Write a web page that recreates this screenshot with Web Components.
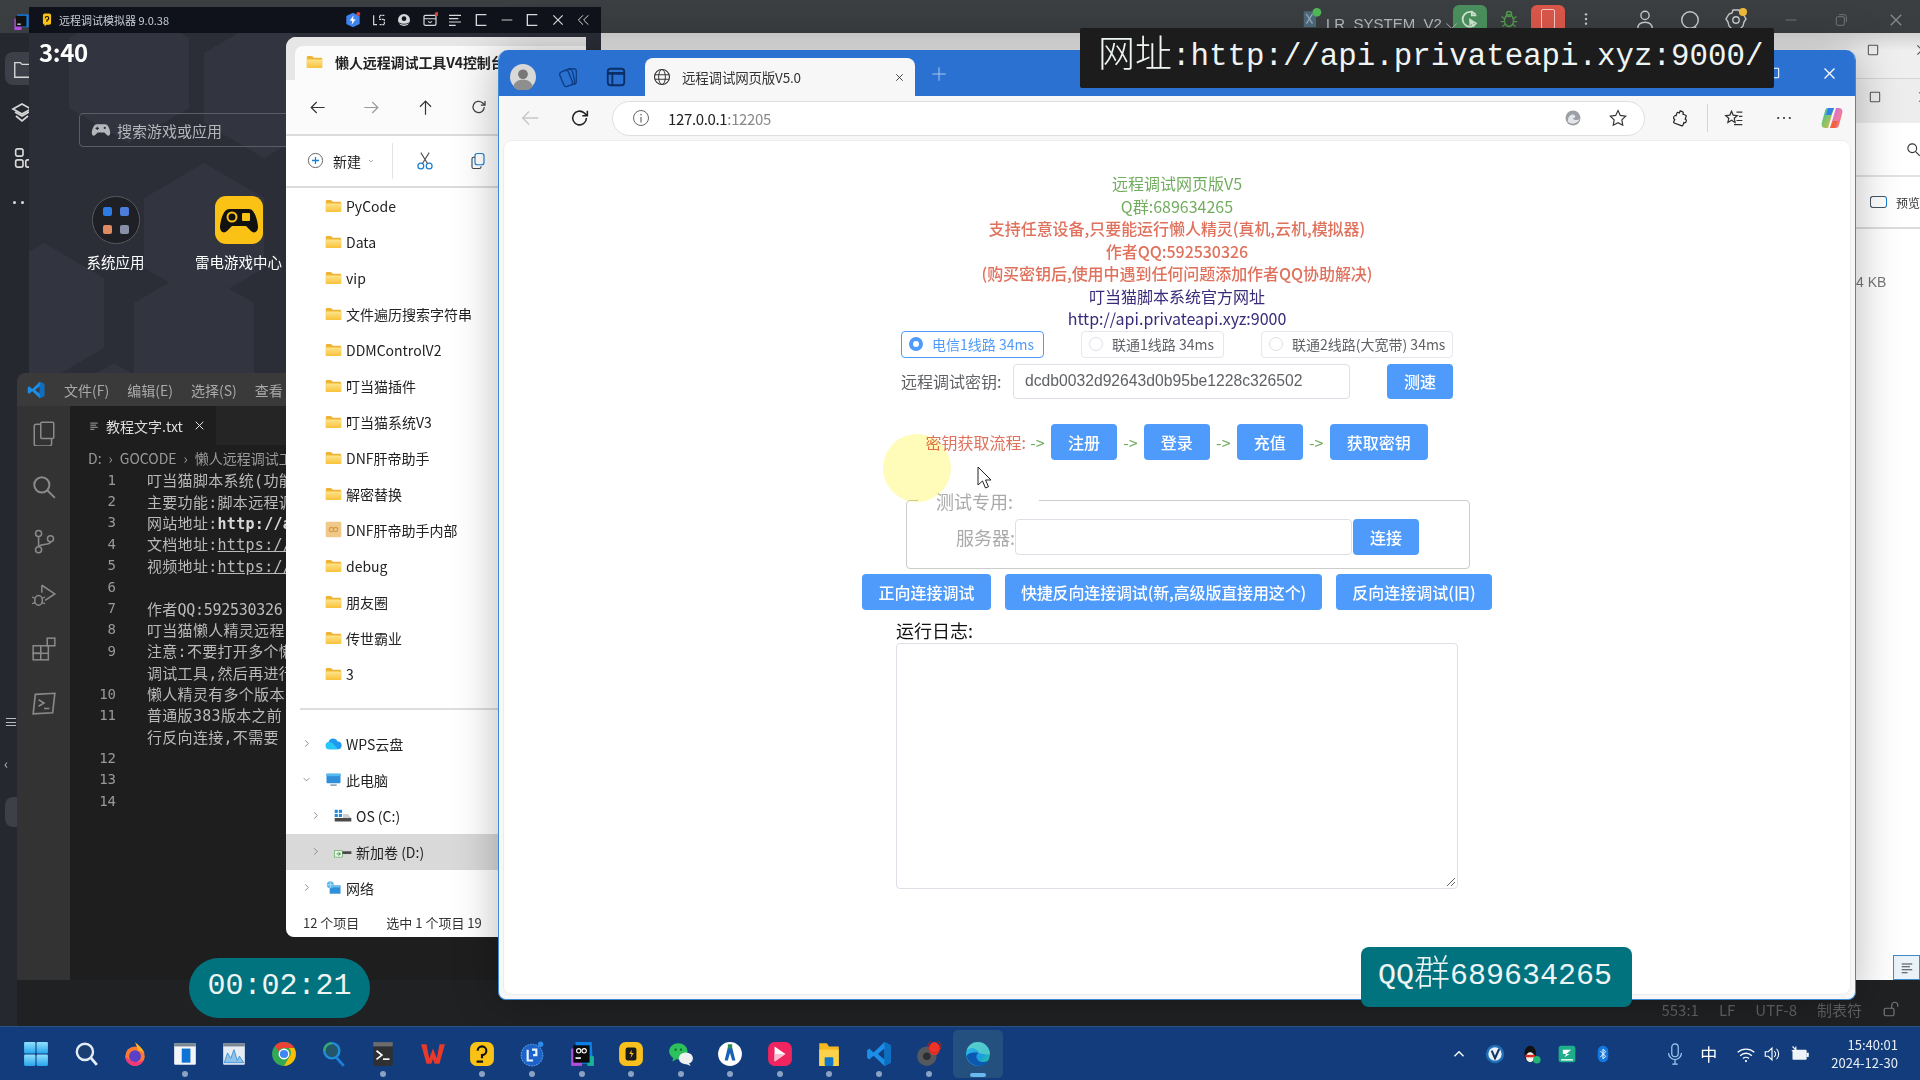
<!DOCTYPE html>
<html lang="zh"><head><meta charset="utf-8"><title>远程调试网页版V5.0</title>
<style>
html,body{margin:0;padding:0;background:#1e1e1e;overflow:hidden}
body{font-family:"Noto Sans CJK SC","Noto Sans",sans-serif}
</style></head><body>
<x-desktop>
  <x-rail></x-rail>
  <x-topbar></x-topbar>
  <x-vscode></x-vscode>
  <x-backwin></x-backwin>
  <x-emulator></x-emulator>
  <x-explorer></x-explorer>
  <x-browser>
    <x-debug-page></x-debug-page>
  </x-browser>
  <x-badge kind="black" style="left:1080px;top:28px;width:694px;height:60px"><span style="font-size:37px;font-weight:300;font-family:'Noto Sans CJK SC',sans-serif;line-height:1;position:relative;top:2px">网址</span>:http://api.privateapi.xyz:9000/</x-badge>
  <x-badge kind="pill" style="left:189px;top:958px;width:181px;height:60px">00:02:21</x-badge>
  <x-badge kind="teal" style="left:1361px;top:947px;width:271px;height:60px">QQ<span style="font-size:36px;font-weight:300;font-family:'Noto Sans CJK SC',sans-serif;line-height:1;position:relative;top:2px">群</span>689634265</x-badge>
  <x-taskbar></x-taskbar>
</x-desktop>
<script>
const F='"Noto Sans CJK SC","Noto Sans",sans-serif';
const I={
folder:['0 0 24 20','<defs><linearGradient id="g" x1="0" y1="0" x2="0" y2="1"><stop offset="0" stop-color="#ffe38a"/><stop offset="1" stop-color="#f7c23c"/></linearGradient></defs><path d="M1 3a1.5 1.5 0 0 1 1.5-1.5h6L11 4h10.5A1.5 1.5 0 0 1 23 5.500V17a1.500 1.500 0 0 1-1.500 1.500h-19A1.500 1.500 0 0 1 1 17z" fill="#eeb534"/><path d="M1 6.500h22V17a1.500 1.500 0 0 1-1.500 1.500h-19A1.500 1.500 0 0 1 1 17z" fill="url(#g)"/>'],
zipfolder:['0 0 24 24','<rect x="1" y="1" width="22" height="22" rx="2" fill="#f0c98a"/><circle cx="9" cy="12" r="3" fill="none" stroke="#d59b45" stroke-width="1.500"/><circle cx="15" cy="12" r="3" fill="none" stroke="#d59b45" stroke-width="1.500"/>'],
cloud:['0 0 24 18','<path d="M6 17a5 5 0 0 1-1-9.900A7 7 0 0 1 18 6a5.500 5.500 0 0 1 0 11z" fill="#1e9bf0"/><path d="M6 17a5 5 0 0 1 0-10c4 0 7 4 12 10z" fill="#27c8f5"/>'],
pc:['0 0 24 22','<rect x="1" y="1" width="22" height="15" rx="1" fill="#2f8fd8"/><rect x="1" y="1" width="22" height="4" fill="#55b8ee"/><rect x="7" y="18" width="10" height="2" fill="#6c8da8"/>'],
drive:['0 0 26 20','<rect x="1" y="1" width="4.500" height="4.500" fill="#1e8be0"/><rect x="7" y="1" width="4.500" height="4.500" fill="#1e8be0"/><rect x="1" y="7" width="4.500" height="4.500" fill="#1e8be0"/><rect x="7" y="7" width="4.500" height="4.500" fill="#1e8be0"/><path d="M1 13h24v5H1z" fill="#4a4a4a"/><path d="M13 7h7l5 6H13z" fill="#d0d0d0"/>'],
drive2:['0 0 28 18','<rect x="1" y="7" width="12" height="10" fill="#e9f3e4" stroke="#58a85a"/><path d="M4 12h6M7 9.500l3 2.500-3 2.500" stroke="#2e9a3f" stroke-width="1.500" fill="none"/><path d="M13 8h14v4H13z" fill="#4a4a4a"/>'],
net:['0 0 24 22','<rect x="6" y="7" width="17" height="13" fill="#2f8fd8"/><rect x="6" y="7" width="17" height="3" fill="#6ec0ee"/><circle cx="7" cy="6" r="5.500" fill="#58b7ea"/><path d="M2 6h10M7 1v10" stroke="#d8eefa" stroke-width="1"/>'],
back:['0 0 24 24','<path d="M21 12H4M11 5l-7 7 7 7" fill="none" stroke="currentColor" stroke-width="1.500"/>'],
fwd:['0 0 24 24','<path d="M3 12h17M13 5l7 7-7 7" fill="none" stroke="currentColor" stroke-width="1.500"/>'],
up:['0 0 24 24','<path d="M12 21V4M5 11l7-7 7 7" fill="none" stroke="currentColor" stroke-width="1.500"/>'],
refresh:['0 0 24 24','<path d="M19 12a7.500 7.500 0 1 1-2.500-5.600L20 9.500M20 4v5.500h-5.500" fill="none" stroke="currentColor" stroke-width="1.700"/>'],
plusc:['0 0 24 24','<circle cx="12" cy="12" r="10" fill="none" stroke="#666" stroke-width="1.400"/><path d="M12 7v10M7 12h10" stroke="#1b7fd4" stroke-width="1.800"/>'],
chevd:['0 0 24 24','<path d="M6 9l6 6 6-6" fill="none" stroke="currentColor" stroke-width="1.800"/>'],
chevr:['0 0 24 24','<path d="M9 5l7 7-7 7" fill="none" stroke="currentColor" stroke-width="1.800"/>'],
cut:['0 0 24 24','<circle cx="7" cy="18" r="3.500" fill="none" stroke="#1b7fd4" stroke-width="1.500"/><circle cx="17" cy="18" r="3.500" fill="none" stroke="#1b7fd4" stroke-width="1.500"/><path d="M9 15L17 2M15 15L7 2" stroke="#555" stroke-width="1.400"/>'],
copy:['0 0 24 24','<rect x="8" y="2" width="12" height="15" rx="3" fill="none" stroke="#1b7fd4" stroke-width="1.600"/><path d="M8 7H6a2 2 0 0 0-2 2v11a2 2 0 0 0 2 2h8a2 2 0 0 0 2-2v-1" fill="none" stroke="#444" stroke-width="1.500"/>'],
search:['0 0 24 24','<circle cx="10" cy="10" r="7" fill="none" stroke="currentColor" stroke-width="1.800"/><path d="M15 15l7 7" stroke="currentColor" stroke-width="1.800"/>'],
globe:['0 0 24 24','<circle cx="12" cy="12" r="10" fill="none" stroke="currentColor" stroke-width="1.500"/><ellipse cx="12" cy="12" rx="4.500" ry="10" fill="none" stroke="currentColor" stroke-width="1.300"/><path d="M2.500 9h19M2.500 15h19" stroke="currentColor" stroke-width="1.300"/>'],
close:['0 0 24 24','<path d="M5 5l14 14M19 5L5 19" fill="none" stroke="currentColor" stroke-width="1.800"/>'],
plus:['0 0 24 24','<path d="M12 3v18M3 12h18" stroke="currentColor" stroke-width="1.300"/>'],
avatar:['0 0 24 24','<circle cx="12" cy="12" r="12" fill="#d8d8d8"/><circle cx="12" cy="9.500" r="4.500" fill="#777"/><path d="M3 21c1-5 5-6.500 9-6.500s8 1.500 9 6.500a12 12 0 0 1-18 0z" fill="#8e8e8e"/>'],
wsp:['0 0 24 24','<rect x="10" y="3" width="10" height="17" rx="3" fill="none" stroke="#0d3f88" stroke-width="1.500"/><rect x="7" y="4" width="10" height="17" rx="3" fill="#2a71d1" stroke="#0d3f88" stroke-width="1.500" transform="rotate(-12 12 12)"/><rect x="4" y="5" width="10" height="17" rx="3" fill="#2a71d1" stroke="#0d3f88" stroke-width="1.500" transform="rotate(-22 9 14)"/>'],
vtab:['0 0 24 24','<rect x="3" y="3" width="18" height="18" rx="3" fill="none" stroke="#0b2e66" stroke-width="2"/><path d="M3 8h18" stroke="#0b2e66" stroke-width="3"/><path d="M8 8v13" stroke="#0b2e66" stroke-width="2"/>'],
info:['0 0 24 24','<circle cx="12" cy="12" r="10" fill="none" stroke="#555" stroke-width="1.200"/><path d="M12 10.500V18" stroke="#555" stroke-width="1.400"/><circle cx="12" cy="7.500" r="1" fill="#555"/>'],
star:['0 0 24 24','<path d="M12 3l2.800 5.900 6.400.9-4.600 4.500 1.100 6.400L12 17.700 6.300 20.700l1.100-6.400L2.800 9.800l6.400-.9z" fill="none" stroke="#333" stroke-width="1.400"/>'],
favs:['0 0 24 24','<path d="M9 4l2 4.500 5 .6-3.700 3.300 1 4.900L9 14.800l-4.300 2.500 1-4.900L2 9.100l5-.6z" fill="none" stroke="#333" stroke-width="1.500"/><path d="M15 5h7M18 10h4M15 15h7M12 20h10" stroke="#333" stroke-width="1.400"/>'],
ext:['0 0 24 24','<path d="M9 3h3a2 2 0 0 1 2 2v1h4a1 1 0 0 1 1 1v4h1a3 3 0 0 1 0 5h-1v4a1 1 0 0 1-1 1H7a1 1 0 0 1-1-1v-4H5a3 3 0 0 1 0-5h1V7a1 1 0 0 1 1-1h2z" fill="none" stroke="#222" stroke-width="1.600" transform="rotate(20 12 12) scale(.9) translate(1.300 1.300)"/>'],
more:['0 0 24 24','<circle cx="5" cy="12" r="1.300" fill="#333"/><circle cx="12" cy="12" r="1.300" fill="#333"/><circle cx="19" cy="12" r="1.300" fill="#333"/>'],
edgeg:['0 0 24 24','<circle cx="12" cy="12" r="10" fill="#9aa0a6"/><path d="M5 17c6 5 14 2 16-4-3 3-9 2-9-1 3 0 4-2 2-4C11 6 5 8 5 17z" fill="#e3e5e8"/>'],
copilot:['0 0 24 24','<defs><linearGradient id="c" x1="0" y1="0" x2="1" y2="1"><stop offset="0" stop-color="#27a7e0"/><stop offset=".45" stop-color="#7fc66a"/><stop offset="1" stop-color="#f7b23b"/></linearGradient><linearGradient id="d" x1="0" y1="0" x2="1" y2="1"><stop offset="0" stop-color="#b06ee0"/><stop offset=".55" stop-color="#f07ba8"/><stop offset="1" stop-color="#f46a37"/></linearGradient></defs><path d="M8 2h6l-6 20H5C2 22 1 19 2 16L5 5c.5-2 1.500-3 3-3z" fill="url(#c)"/><path d="M16 22h-6l6-20h3c3 0 4 3 3 6l-3 11c-.5 2-1.500 3-3 3z" fill="url(#d)"/><path d="M8 2h6l-3 7H6z" fill="#2f80e8"/><path d="M10 22h5l3-7h-5z" fill="#f0643c"/>'],
person:['0 0 24 24','<circle cx="12" cy="7" r="4.500" fill="none" stroke="currentColor" stroke-width="1.500"/><path d="M4 22c0-5 3.500-7.500 8-7.500s8 2.500 8 7.500" fill="none" stroke="currentColor" stroke-width="1.500"/>'],
ring:['0 0 24 24','<circle cx="12" cy="12" r="9" fill="none" stroke="currentColor" stroke-width="1.600"/><path d="M17 19l3 4" stroke="currentColor" stroke-width="1.600"/>'],
gear:['0 0 24 24','<path d="M9 2h6l1 3 3 1 3 5-2 3-1 4-4 4H9l-4-4-1-4-2-3 3-5 3-1z" fill="none" stroke="currentColor" stroke-width="1.400"/><circle cx="12" cy="12" r="3.200" fill="none" stroke="currentColor" stroke-width="1.400"/><circle cx="19" cy="4" r="4" fill="#f0b93a"/>'],
min:['0 0 24 24','<path d="M4 12h16" stroke="currentColor" stroke-width="1.400"/>'],
restore:['0 0 24 24','<rect x="5" y="7" width="12" height="13" rx="2" fill="none" stroke="currentColor" stroke-width="1.400"/><path d="M9 4h8a3 3 0 0 1 3 3v8" fill="none" stroke="currentColor" stroke-width="1.400"/>'],
square:['0 0 24 24','<rect x="4" y="4" width="16" height="16" rx="1" fill="none" stroke="currentColor" stroke-width="1.800"/>'],
sqopen:['0 0 24 24','<path d="M20 4H5v16h15" fill="none" stroke="currentColor" stroke-width="2"/>'],
boost:['0 0 24 24','<path d="M12 1l10 5v12l-10 5-10-5V6z" fill="#3f83ee"/><path d="M13 5l-6 8h4l-1 6 6-8h-4z" fill="#fff"/><circle cx="20" cy="3" r="3" fill="#d8433a"/>'],
keys:['0 0 24 24','<path d="M4 5v14h5" fill="none" stroke="currentColor" stroke-width="1.800"/><path d="M20 5h-7v6h7v8h-7" fill="none" stroke="currentColor" stroke-width="1.800" stroke-dasharray="3 1"/>'],
mouse:['0 0 24 24','<circle cx="12" cy="12" r="9" fill="currentColor"/><circle cx="12" cy="10" r="3.500" fill="#0f121b"/><path d="M4 16c4 3 12 3 16 0" fill="none" stroke="#0f121b" stroke-width="1.200"/>'],
mail:['0 0 24 24','<rect x="3" y="5" width="18" height="15" rx="2" fill="none" stroke="currentColor" stroke-width="1.800"/><path d="M3 10h18M9 14l3 2 3-2" fill="none" stroke="currentColor" stroke-width="1.600"/><circle cx="22" cy="3" r="3" fill="#d8433a"/>'],
chevl2:['0 0 24 24','<path d="M12 5l-7 7 7 7M20 5l-7 7 7 7" fill="none" stroke="currentColor" stroke-width="1.500"/>'],
dots:['0 0 24 24','<circle cx="12" cy="5" r="1.800" fill="currentColor"/><circle cx="12" cy="12" r="1.800" fill="currentColor"/><circle cx="12" cy="19" r="1.800" fill="currentColor"/>'],
bug:['0 0 24 24','<ellipse cx="12" cy="14" rx="5.500" ry="7" fill="none" stroke="#4f9a4a" stroke-width="1.800"/><circle cx="12" cy="6" r="3" fill="none" stroke="#4f9a4a" stroke-width="1.800"/><path d="M3 9l4 3M21 9l-4 3M2 15h4M22 15h-4M4 21l4-3M20 21l-4-3" stroke="#4f9a4a" stroke-width="1.500"/>'],
rerun:['0 0 24 24','<path d="M18 7a8 8 0 1 0 1 9" fill="none" stroke="#cfe3cf" stroke-width="2"/><path d="M14 3v5h5" fill="none" stroke="#cfe3cf" stroke-width="2"/><path d="M11 11l8 5-3.500 1 1.500 3-1.500.7-1.500-3-2.500 2z" fill="#cfe3cf"/>'],
lrsys:['0 0 24 24','<rect x="2" y="5" width="14" height="18" fill="#4d6a7a"/><path d="M5 8l7 11M12 8l-7 11" stroke="#9ab" stroke-width="1.500"/><circle cx="17" cy="6" r="5" fill="#4fb857"/>'],
lock:['0 0 24 24','<rect x="3" y="11" width="13" height="10" rx="2" fill="none" stroke="currentColor" stroke-width="1.600"/><path d="M13 11V7a4 4 0 0 1 8 0v2" fill="none" stroke="currentColor" stroke-width="1.600"/>'],
gamepad:['0 0 24 24','<path d="M7 5h10c3 0 5 4 6 9 .5 4-2 6-4 4l-3-3H8l-3 3c-2 2-4.500 0-4-4C2 9 4 5 7 5z" fill="currentColor"/><circle cx="16.500" cy="9.500" r="1.300" fill="#2b2e37"/><path d="M7.500 8v4M5.500 10h4" stroke="#2b2e37" stroke-width="1.400"/>'],
files:['0 0 24 24','<path d="M3 5h6l2 2h10v14H3z" fill="none" stroke="currentColor" stroke-width="1.500"/>'],
hat:['0 0 24 24','<path d="M12 3l9 5-9 5-9-5z" fill="none" stroke="currentColor" stroke-width="1.700"/><path d="M5 11l7 4 7-4M6 15l6 5 6-5" fill="none" stroke="currentColor" stroke-width="1.700"/>'],
apps:['0 0 24 24','<rect x="4" y="2" width="8" height="8" rx="2" fill="none" stroke="currentColor" stroke-width="1.800"/><rect x="4" y="14" width="8" height="8" rx="2" fill="none" stroke="currentColor" stroke-width="1.800"/><rect x="15" y="14" width="8" height="8" rx="2" fill="none" stroke="currentColor" stroke-width="1.800"/>'],
sysapp:['0 0 48 48','<rect x="0.500" y="0.500" width="47" height="47" rx="23" fill="#1e2026" stroke="#585a60"/><rect x="11" y="11" width="9" height="9" rx="2" fill="#2c7be5"/><rect x="28" y="11" width="9" height="9" rx="2" fill="#4c7dd8"/><rect x="11" y="29" width="9" height="9" rx="2" fill="#e08a62"/><rect x="28" y="29" width="9" height="9" rx="2" fill="#8a8fa8"/>'],
ldgame:['0 0 48 48','<rect width="48" height="48" rx="11" fill="#f9c215"/><path d="M14 13h20c5 0 8 9 9 17 .5 6-4 8-7 5l-5-5H17l-5 5c-3 3-7.500 1-7-5 1-8 4-17 9-17z" fill="#111"/><circle cx="17" cy="21" r="4.500" fill="none" stroke="#f9c215" stroke-width="2"/><rect x="27" y="17" width="8" height="8" rx="1" fill="#f9c215"/>'],
ldlogo:['0 0 24 24','<path d="M5 4a3 3 0 0 1 3-3h8a3 3 0 0 1 3 3v13a3 3 0 0 1-3 3h-5l-3 3v-3a3 3 0 0 1-3-3z" fill="#f9c215"/><path d="M9 9a3 3 0 1 1 3 3v3" fill="none" stroke="#111" stroke-width="2"/>'],
golandtop:['0 0 24 24','<path d="M6 2h16v18H6z" fill="#0d7ef0"/><path d="M2 8h10v16H2z" fill="#b24ddc"/><rect x="4" y="4" width="15" height="15" fill="#111"/><rect x="6" y="15" width="5" height="1.500" fill="#fff"/>'],
vsc:['0 0 24 24','<path d="M17 1l6 3v16l-6 3L7 13.500l-4 3.500-2-1.500v-7L3 7l4 3.500zM17 7l-6 5 6 5z" fill="#1b8ee8"/><path d="M17 1l6 3v16l-6 3z" fill="#0e6fc0"/>'],
doc:['0 0 24 24','<rect x="4" y="2" width="16" height="20" rx="2" fill="none" stroke="currentColor" stroke-width="1.400" transform="translate(-1 2)"/><rect x="9" y="2" width="12" height="15" rx="1" fill="#333" stroke="currentColor" stroke-width="1.400"/>'],
sc:['0 0 24 24','<circle cx="7" cy="5" r="2.800" fill="none" stroke="currentColor" stroke-width="1.400"/><circle cx="7" cy="20" r="2.800" fill="none" stroke="currentColor" stroke-width="1.400"/><circle cx="18" cy="10" r="2.800" fill="none" stroke="currentColor" stroke-width="1.400"/><path d="M7 8v9M18 13c0 3-7 1-11 4" fill="none" stroke="currentColor" stroke-width="1.400"/>'],
debug:['0 0 24 24','<path d="M10 3l12 8-9 6M10 3v7" fill="none" stroke="currentColor" stroke-width="1.400"/><ellipse cx="7" cy="17" rx="3.500" ry="4.500" fill="none" stroke="currentColor" stroke-width="1.400"/><path d="M1 14l3 1M1 20l3-1M13 14l-3 1M13 20l-3-1" stroke="currentColor" stroke-width="1.200"/>'],
extv:['0 0 24 24','<rect x="2" y="9" width="7" height="7" fill="none" stroke="currentColor" stroke-width="1.400"/><rect x="2" y="16" width="14" height="6" fill="none" stroke="currentColor" stroke-width="1.400"/><path d="M9 16v6" stroke="currentColor" stroke-width="1.400"/><path d="M9 9h7v7" fill="none" stroke="currentColor" stroke-width="1.400"/><rect x="15" y="2" width="7" height="7" fill="none" stroke="currentColor" stroke-width="1.400"/>'],
term:['0 0 24 24','<path d="M4 4l18-1-2 18-18 1z" fill="none" stroke="currentColor" stroke-width="1.500"/><path d="M7 9l5 3-5 3M12 17h5" fill="none" stroke="currentColor" stroke-width="1.400"/>'],
lines:['0 0 24 24','<path d="M3 5h18M3 10h14M3 15h18M3 20h10" stroke="currentColor" stroke-width="1.800"/>'],
win:['0 0 24 24','<defs><linearGradient id="w" x1="0" y1="0" x2="0" y2="1"><stop offset="0" stop-color="#8fe0fb"/><stop offset="1" stop-color="#26a5ee"/></linearGradient></defs><rect x="1" y="1" width="10.500" height="10.500" rx="1" fill="url(#w)"/><rect x="12.500" y="1" width="10.500" height="10.500" rx="1" fill="url(#w)"/><rect x="1" y="12.500" width="10.500" height="10.500" rx="1" fill="url(#w)"/><rect x="12.500" y="12.500" width="10.500" height="10.500" rx="1" fill="url(#w)"/>'],
tsearch:['0 0 24 24','<circle cx="11" cy="10" r="7.500" fill="#1a3d72" stroke="#e4ecf6" stroke-width="2.200"/><path d="M16.500 15.500L22 22" stroke="#e4ecf6" stroke-width="2.600"/>'],
firefox:['0 0 24 24','<circle cx="12" cy="14" r="9" fill="#ff7a2f"/><path d="M12 1c3 3 7 5 9 11-2-3-5-3-6-3z" fill="#ffb02e"/><circle cx="12" cy="14" r="5.500" fill="#5a3fc9"/><path d="M3 14c0 6 6 9 9 9s7-2 8-6c-3 3-10 4-17-3z" fill="#f0387a"/>'],
fileapp:['0 0 24 24','<rect x="2" y="2" width="20" height="20" rx="1" fill="#f3f5f8"/><rect x="2" y="2" width="20" height="3" fill="#7c8794"/><rect x="9" y="7" width="8" height="13" fill="#0f72d6"/>'],
perf:['0 0 24 24','<rect x="2" y="2" width="20" height="20" rx="1" fill="#e6ecf3"/><rect x="2" y="2" width="20" height="3" fill="#7c8794"/><path d="M3 20l3-9 3 5 3-8 3 10 2-4 4 6z" fill="#8fc3ea" stroke="#3a8ed4" stroke-width=".8"/>'],
chrome:['0 0 24 24','<circle cx="12" cy="12" r="11" fill="#34a853"/><path d="M12 1a11 11 0 0 1 9.500 5.500H12a5.500 5.500 0 0 0-5 3L3.500 4.500A11 11 0 0 1 12 1z" fill="#ea4335"/><path d="M21.500 6.500A11 11 0 0 1 12 23l5-8.500a5.500 5.500 0 0 0-.5-8z" fill="#fbbc05"/><circle cx="12" cy="12" r="5" fill="#fff"/><circle cx="12" cy="12" r="3.800" fill="#4285f4"/>'],
bsearch:['0 0 24 24','<circle cx="10" cy="9" r="7" fill="#24566a" stroke="#1e8fd8" stroke-width="2.200"/><path d="M10 2a7 7 0 0 0-7 7" stroke="#3aa86a" stroke-width="2.200" fill="none"/><path d="M14 15l7 8" stroke="#1e7fd8" stroke-width="2.600"/>'],
termapp:['0 0 24 24','<rect x="3" y="1" width="18" height="22" rx="1" fill="#2f3033"/><rect x="3" y="1" width="18" height="4" fill="#6a6c70"/><path d="M6 9l5 4-5 4" fill="none" stroke="#fff" stroke-width="1.500"/><rect x="12" y="16" width="6" height="1.500" fill="#fff"/>'],
wps:['0 0 24 24','<path d="M1 3h5l2.500 13L12 7l3.500 9L18 3h5l-5 18h-4.500L12 16.500 10.500 21H6z" fill="#e8392b"/>'],
ldapp:['0 0 24 24','<rect x="1" y="1" width="22" height="22" rx="6" fill="#f9c215"/><path d="M8 9a4 4 0 1 1 4 4v3M7 19h6" fill="none" stroke="#111" stroke-width="2"/>'],
lr:['0 0 24 24','<circle cx="12" cy="13" r="10" fill="#1c62c8" stroke="#5aa0e8" stroke-width="1" stroke-dasharray="1.500 1"/><path d="M8 8v10h5M12 8h4v5h-3" fill="none" stroke="#e8f3ff" stroke-width="2"/><circle cx="20" cy="3" r="2.500" fill="#2d8bea"/>'],
goland:['0 0 24 24','<path d="M6 1h15l1 20H8z" fill="#0e7fe8"/><path d="M2 7h10v16H2z" fill="#b24ddc"/><path d="M17 14h6v9h-6z" fill="#19b39a"/><rect x="4" y="4" width="15" height="16" fill="#0a0a0a"/><circle cx="9" cy="9" r="2" fill="none" stroke="#fff"/><circle cx="14" cy="9" r="2" fill="none" stroke="#fff"/><rect x="6" y="15" width="5" height="1.500" fill="#fff"/>'],
yellow:['0 0 24 24','<rect x="1" y="1" width="22" height="22" rx="6" fill="#f9bf1c"/><rect x="7" y="6" width="10" height="12" rx="2" fill="#1a1a1a"/><path d="M12.500 8l-2 4h2l-1 4 3-5h-2z" fill="#f9bf1c"/>'],
wechat:['0 0 24 24','<ellipse cx="9.500" cy="9.500" rx="8.500" ry="7.500" fill="#2dc15c"/><path d="M5 15l-1 4 4-2.500z" fill="#2dc15c"/><circle cx="7" cy="8" r="1" fill="#0d5a2a"/><circle cx="12" cy="8" r="1" fill="#0d5a2a"/><ellipse cx="16.500" cy="16" rx="6.500" ry="5.500" fill="#eef0f2"/><path d="M19 20l2 3-5-2z" fill="#eef0f2"/>'],
hm:['0 0 24 24','<circle cx="12" cy="12" r="11" fill="#fff"/><path d="M7 18l3-12h4l3 12h-3l-2-7-2 7z" fill="#1a5fb8"/><rect x="10" y="3" width="4" height="4" fill="#2a8a5a"/>'],
redapp:['0 0 24 24','<rect x="1" y="1" width="22" height="22" rx="6" fill="#f0245f"/><path d="M7 5l10 7-10 7z" fill="#fff"/><path d="M7 12l10 0-10 7z" fill="#f9bdd0"/>'],
folderapp:['0 0 24 24','<path d="M3 2h7l2 3h9v18H3z" fill="#f6b91f"/><path d="M3 8h18v15H3z" fill="#fbd24a"/><rect x="8" y="15" width="8" height="8" rx="1" fill="#1276c8"/>'],
obs:['0 0 24 24','<circle cx="10" cy="14" r="9" fill="#55585c"/><circle cx="10" cy="14" r="3.500" fill="#2c2e31"/><ellipse cx="17" cy="7" rx="5" ry="6" fill="#ef3326"/><circle cx="17" cy="5" r="6" fill="none" stroke="#bb2a22" stroke-width=".8"/>'],
edge:['0 0 24 24','<defs><linearGradient id="e" x1="0" y1="0" x2="1" y2="1"><stop offset="0" stop-color="#35c1e6"/><stop offset=".6" stop-color="#1a9ce0"/><stop offset="1" stop-color="#2bd08a"/></linearGradient></defs><circle cx="12" cy="12" r="11" fill="url(#e)"/><path d="M1.500 14c1 5 6 9 12 9 4 0 7-2 8-5-3 2-8 2-10-1-1.500-2-1-5 1-6-5-1-10 0-11 3z" fill="#0c58b0"/><path d="M13 11c3 1 9 2 10 1-.5-6-5-11-11-11-5 0-9 3-10.500 8 3-4 9-3 11.500 2z" fill="#6fe0c0" opacity=".6"/>'],
tick:['0 0 24 24','<circle cx="12" cy="12" r="11" fill="#1f6fb8"/><circle cx="12" cy="12" r="8" fill="#e9f2fb"/><path d="M8 8l4 9 5-11" fill="none" stroke="#14365e" stroke-width="2.500"/>'],
qq:['0 0 24 24','<ellipse cx="11" cy="12" rx="7" ry="10" fill="#111"/><ellipse cx="11" cy="16" rx="5" ry="6" fill="#f3f3f3"/><path d="M5 13h12v3H5z" fill="#d82a20"/><circle cx="19" cy="19" r="4.500" fill="#22b573"/>'],
greenbox:['0 0 24 24','<rect x="2" y="2" width="20" height="20" rx="3" fill="#1fae8a"/><path d="M7 7h10l-6 5h4l-6 4 2-4H7z" fill="#fff"/><rect x="5" y="18" width="14" height="2" fill="#d8f3ea"/>'],
bt:['0 0 24 24','<rect x="5" y="1" width="14" height="22" rx="7" fill="#1577e0"/><path d="M8.500 8l7 7-3.500 3.500v-13L15.500 9l-7 7" fill="none" stroke="#fff" stroke-width="1.300"/>'],
mic:['0 0 24 24','<rect x="8.500" y="1" width="7" height="14" rx="3.500" fill="none" stroke="#9fd0f5" stroke-width="1.300"/><path d="M5 11a7 7 0 0 0 14 0M12 18v5M9 23h6" fill="none" stroke="#9fd0f5" stroke-width="1.300"/>'],
wifi:['0 0 24 24','<path d="M2 10a15 15 0 0 1 20 0M5 14a10 10 0 0 1 14 0M8.500 17.500a5 5 0 0 1 7 0" fill="none" stroke="#fff" stroke-width="1.600"/><circle cx="12" cy="20.500" r="1.300" fill="#fff"/>'],
vol:['0 0 24 24','<path d="M3 9h4l5-5v16l-5-5H3z" fill="none" stroke="#fff" stroke-width="1.500"/><path d="M15 8a6 6 0 0 1 0 8M18 5a10 10 0 0 1 0 14" fill="none" stroke="#fff" stroke-width="1.400"/>'],
batt:['0 0 24 24','<rect x="3" y="7" width="17" height="12" rx="1" fill="#eef3f8"/><rect x="20" y="10.500" width="2.500" height="5" fill="#fff"/><path d="M3 3l4 4M7 3v5H2" stroke="#fff" stroke-width="1.300" fill="none"/>'],
};
function def(n,f){customElements.define(n,f)}
function shadow(el,html){const s=el.shadowRoot||el.attachShadow({mode:'open'});s.innerHTML=html;return s}
const ic=(n,s,st='')=>`<x-icon name="${n}" size="${s}" style="${st}"></x-icon>`;

def('x-icon',class extends HTMLElement{connectedCallback(){
  const n=this.getAttribute('name'),[w,h]=(this.getAttribute('size')||'24').split(',');const d=I[n];
  shadow(this,`<style>:host{display:inline-flex;flex:none;line-height:0}svg{display:block}</style><svg xmlns="http://www.w3.org/2000/svg" viewBox="${d[0]}" width="${w}" height="${h||w}">${d[1]}</svg>`);
}});

def('x-desktop',class extends HTMLElement{connectedCallback(){
  shadow(this,`<style>:host{display:block;position:relative;width:1920px;height:1080px;overflow:hidden;background:#1e1e1e}</style><slot></slot>`);
}});

def('x-rail',class extends HTMLElement{connectedCallback(){
  shadow(this,`<style>:host{position:absolute;left:0;top:33px;width:29px;height:993px;background:#262830;color:#d8d8d8;display:flex;flex-direction:column;align-items:flex-start}
  .sel{margin:19px 0 0 5px;width:24px;height:33px;background:#3d4048;border-radius:8px 0 0 8px;display:flex;align-items:center;padding-left:7px;box-sizing:border-box}
  .i{margin:16px 0 0 10px}.i2{margin:17px 0 0 12px}.dots{margin:27px 0 0 13px;display:flex;gap:5px}.dots b{width:3px;height:3px;border-radius:50%;background:#ddd}
  .low{margin:0 0 0 4px;width:13px;font:14px ${F};color:#bbb}.sel2{margin:24px 0 0 5px;width:12px;height:30px;background:#3d4048;border-radius:8px 0 0 8px}</style>
  <div class="sel">${ic('files',22)}</div><div class="i">${ic('hat',24)}</div><div class="i2">${ic('apps',22)}</div><div class="dots"><b></b><b></b><b></b></div>
  <div class="low" style="margin-top:507px">≡</div><div class="low" style="margin-top:22px">‹</div><div class="sel2"></div>`);
}});

def('x-topbar',class extends HTMLElement{connectedCallback(){
  shadow(this,`<style>:host{position:absolute;left:0;top:0;width:1920px;height:33px;background:linear-gradient(#3c3f42,#3a3d3f);display:flex;align-items:flex-start;color:#c9c9c9;font:15px ${F}}
  .r{margin-left:1302px;display:flex;align-items:center;height:33px;flex:1}
  .btn{width:34px;height:28px;border-radius:6px;display:flex;align-items:center;justify-content:center;margin-top:5px}
  .txt{margin-left:3px;font:15px "Liberation Sans",sans-serif;width:112px;white-space:nowrap;position:relative;top:7px;color:#b5b8ba}
  .r>x-icon{position:relative}</style>
  ${ic('golandtop',17,'position:absolute;left:13px;top:13px')}
  <div class="r">${ic('lrsys',21,'top:1px')}<span class="txt">LR_SYSTEM_V2 ⌵</span>
  <div class="btn" style="margin-left:15px;background:#4b8f5e">${ic('rerun',22)}</div>${ic('bug',20,'margin-left:12px;top:2px')}
  <div class="btn" style="margin-left:12px;background:#d9574a"><div style="width:12px;height:18px;border:1.500px solid #f4c7c2;border-radius:2px"></div></div>
  ${ic('dots',16,'margin-left:13px;top:2px')}${ic('person',22,'margin-left:40px;top:3px')}${ic('ring',22,'margin-left:23px;top:3px')}${ic('gear',24,'margin-left:23px;top:3px')}
  ${ic('min',16,'margin-left:35px;color:#777;top:3px')}${ic('restore',16,'margin-left:34px;color:#777;top:3px')}${ic('close',18,'margin-left:38px;color:#888;top:3px')}</div>`);
}});

def('x-emulator',class extends HTMLElement{connectedCallback(){
  const hex=[[40,-30],[175,-15],[115,130],[-45,210],[105,235],[25,330],[-45,330]];
  shadow(this,`<style>:host{position:absolute;left:29px;top:7px;width:572px;height:366px;background:#2b2e37;color:#fff;overflow:hidden;display:flex;flex-direction:column;font-family:${F}}
  .title{height:26px;background:#0f121b;display:flex;align-items:center;padding-left:11px;flex:none;z-index:1}
  .title span{margin:0 0 0 5px;font-size:11px;color:#c8ccd4;white-space:nowrap;width:286px;flex:none}
  .tools{display:flex;gap:9.600px;color:#d6d8dc}
  .bg{position:absolute;left:0;top:26px}
  .body{position:relative;display:flex;flex-direction:column;padding-left:10px}
  .time{font-size:24px;font-weight:700;line-height:28px;margin-top:5px;letter-spacing:-.4px}
  .search{margin:47px 0 0 40px;height:34px;width:260px;border:1px solid #5a5d66;border-radius:4px;box-sizing:border-box;display:flex;align-items:center;padding-left:11px;color:#b4b6bb;font-size:15px;gap:6px}
  .apps{display:flex;margin:49px 0 0 15px}
  .app{width:123px;display:flex;flex-direction:column;align-items:center;font-size:14.500px;gap:7px;white-space:nowrap}
  </style>
  <svg class="bg" width="572" height="340">${hex.map(([x,y])=>`<polygon transform="translate(${x},${y})" points="60,0 120,35 120,105 60,140 0,105 0,35" fill="#32353f"/>`).join('')}</svg>
  <div class="title">${ic('ldlogo',14)}<span>远程调试模拟器 9.0.38</span>
   <div class="tools">${ic('boost',16)}${ic('keys',16)}${ic('mouse',16)}${ic('mail',16)}${ic('lines',16)}${ic('sqopen',16)}${ic('min',16)}${ic('sqopen',16)}${ic('close',16)}${ic('chevl2',16)}</div></div>
  <div class="body"><div class="time">3:40</div>
  <div class="search">${ic('gamepad',20)}<span>搜索游戏或应用</span></div>
  <div class="apps"><div class="app">${ic('sysapp',48)}<span>系统应用</span></div><div class="app">${ic('ldgame',48)}<span>雷电游戏中心</span></div></div></div>`);
}});

def('x-vscode',class extends HTMLElement{connectedCallback(){
  const L=[['1','叮当猫脚本系统(功能'],['2','主要功能:脚本远程调'],['3','网站地址:<b>http://a</b>'],['4','文档地址:<u>https://</u>'],['5','视频地址:<u>https://</u>'],['6',''],['7','作者<u class="n0">QQ:592530326</u>'],['8','叮当猫懒人精灵远程'],['9','注意:不要打开多个懒'],['','调试工具,然后再进行'],['10','懒人精灵有多个版本'],['11','普通版383版本之前'],['','行反向连接,不需要'],['12',''],['13',''],['14','']];
  shadow(this,`<style>:host{position:absolute;left:17px;top:373px;width:1903px;height:653px;background:#1e1e1e;color:#ccc;display:flex;flex-direction:column;font-family:${F};border-radius:8px 0 0 0;overflow:hidden}
  .title{height:33px;background:#3a3a3a;display:flex;align-items:center;font-size:14px;color:#a9a9a9;flex:none;padding-left:10px}
  .title span{margin-right:18px;white-space:nowrap}
  .main{flex:1;display:flex;min-height:0}
  .act{width:53px;background:#333;display:flex;flex-direction:column;align-items:center;color:#8a8a8a;gap:28px;padding-top:14px;flex:none;box-sizing:border-box}
  .ed{flex:1;display:flex;flex-direction:column;min-width:0}
  .tabs{height:39px;background:#252526;display:flex;flex:none}
  .tab{width:146px;background:#1e1e1e;display:flex;align-items:center;padding-left:19px;box-sizing:border-box;color:#ddd;font-size:14px;gap:7px}
  .crumb{height:26px;font-size:14px;color:#9a9a9a;display:flex;align-items:center;padding-left:18px;gap:7px;white-space:nowrap;flex:none}
  .code{font:15px "DejaVu Sans Mono","Noto Sans CJK SC",monospace;margin-top:-2px}
  .ln{height:21.400px;display:flex;align-items:center;white-space:nowrap}
  .n{width:46px;text-align:right;color:#9a9a9a;font-size:14px;flex:none;margin-right:31px}
  .c{color:#b9b9b9;letter-spacing:.3px}.c b{color:#d8d8d8}.c u{color:#bbb}
  .c u.n0{text-decoration:none;letter-spacing:-.3px}
  .status{height:46px;flex:none;background:#1f2123;display:flex;align-items:center;justify-content:flex-end;padding:12px 20px 0 0;box-sizing:border-box;font-size:15px;color:#5f6163;gap:20px;margin-left:-53px;position:relative}
  </style>
  <div class="title">${ic('vsc',18)}<span style="margin-left:19px">文件(F)</span><span>编辑(E)</span><span>选择(S)</span><span>查看</span></div>
  <div class="main"><div class="act">${ic('doc',26)}${ic('search',26)}${ic('sc',26)}${ic('debug',26)}${ic('extv',26)}${ic('term',26)}</div>
  <div class="ed"><div class="tabs"><div class="tab">${ic('lines',10,'color:#ccc')}<span>教程文字.txt</span>${ic('close',13,'margin-left:3px;color:#eee')}</div></div>
  <div class="crumb"><span>D:</span>›<span>GOCODE</span>›<span>懒人远程调试工具</span></div>
  <div class="code">${L.map(([n,c])=>`<div class="ln"><span class="n">${n}</span><span class="c">${c}</span></div>`).join('')}</div>
  <div style="flex:1"></div>
  <div class="status"><span>553:1</span><span>LF</span><span>UTF-8</span><span>制表符</span>${ic('lock',18,'color:#777')}</div></div></div>`);
}});

def('x-backwin',class extends HTMLElement{connectedCallback(){
  shadow(this,`<style>:host{position:absolute;left:600px;top:33px;width:1320px;height:947px;background:#fff;color:#555;display:flex;flex-direction:column;font-family:${F};overflow:hidden}
  .r{padding-left:1266px;display:flex;align-items:center;flex:none;box-sizing:border-box;gap:34px;white-space:nowrap}
  .a{height:45px;background:linear-gradient(#d2d2d2,#efefef 40%);padding-bottom:12px}
  .b{height:45px;background:#ededed;border-top:1px solid #d5d5d5;padding-bottom:8px}
  .c{height:54px;padding-left:1306px;border-bottom:2px solid #e2e2e2}
  .d{height:52px;font-size:12px;color:#333;gap:9px;padding-left:1270px;border-bottom:2px solid #ddd}
  .e{padding:45px 0 0 1256px;font:14px "Liberation Sans",sans-serif;color:#777}
  .h{margin:auto 0 0 1293px;width:27px;height:25px;border:1px solid #3d8bc8;box-sizing:border-box;background:#eaf3fa;display:flex;align-items:center;justify-content:center;color:#444}
  </style>
  <div class="r a">${ic('square',14)}${ic('close',16)}</div><div class="r b" style="padding-left:1268px">${ic('square',14)}${ic('close',16)}</div>
  <div class="r c">${ic('search',15,'color:#333')}</div>
  <div class="r d"><div style="width:17px;height:12px;border:1.500px solid #456;border-radius:3px;box-sizing:border-box;border-right-color:#1b7fd4;flex:none"></div><span>预览</span></div>
  <div class="e">4 KB</div><div class="h">${ic('lines',14)}</div>`);
}});

def('x-tree-item',class extends HTMLElement{connectedCallback(){
  const ind=+this.getAttribute('indent')||0,chev=this.getAttribute('chev'),icon=this.getAttribute('icon')||'folder';
  const w=icon==='zipfolder'?17:icon==='drive'?18:icon==='drive2'?18:17,h=icon==='folder'?14:icon==='cloud'?13:icon==='zipfolder'?17:14;
  shadow(this,`<style>:host{display:flex;align-items:center;height:36px;padding-left:${15+ind}px;font-size:14px;color:#222;white-space:nowrap;flex:none}
  :host([selected]){background:#d9d9d9}
  .c{width:24px;color:#777;display:flex}.t{margin-left:4px}</style>
  <div class="c">${chev?ic(chev,11):''}</div>${ic(icon,w+','+h)}<span class="t"><slot></slot></span>`);
}});

def('x-explorer',class extends HTMLElement{connectedCallback(){
  const folders=['PyCode','Data','vip','文件遍历搜索字符串','DDMControlV2','叮当猫插件','叮当猫系统V3','DNF肝帝助手','解密替换','DNF肝帝助手内部','debug','朋友圈','传世霸业','3'];
  shadow(this,`<style>:host{position:absolute;left:286px;top:37px;width:300px;height:900px;background:#fff;border-radius:10px 0 0 8px;overflow:hidden;display:flex;flex-direction:column;font-family:${F};color:#222}
  .top{height:43px;background:#e6e6e6;flex:none;display:flex;align-items:flex-end;padding-left:9px}
  .tab{width:300px;height:34px;background:#fbfbfb;border-radius:8px 0 0 0;display:flex;align-items:center;padding:0 0 3px 11px;gap:12px;font-size:14px;font-weight:700;white-space:nowrap;letter-spacing:-.1px;box-sizing:border-box}
  .nav{height:54px;background:#fbfbfb;border-bottom:2px solid #dcdcdc;display:flex;align-items:center;padding-left:22px;gap:35px;flex:none;box-sizing:content-box}
  .bar{height:49.500px;border-bottom:2px solid #dcdcdc;display:flex;align-items:center;padding-left:21px;font-size:14px;flex:none}
  .sep{width:1px;height:36px;background:#e4e4e4;margin:0 22px 0 17px}
  .list{display:flex;flex-direction:column;flex:none}
  hr{margin:16px 0 0 14px;border:0;border-top:2px solid #ddd;height:16px;flex:none}
  .status{font-size:13px;color:#333;display:flex;padding-left:17px;gap:27px;height:30px;align-items:center;white-space:nowrap;margin-top:2px}
  </style>
  <div class="top"><div class="tab">${ic('folder','17,14')}<span>懒人远程调试工具V4控制台</span></div></div>
  <div class="nav">${ic('back',19,'color:#333')}${ic('fwd',19,'color:#999')}${ic('up',19,'color:#333')}${ic('refresh',18,'color:#444')}</div>
  <div class="bar">${ic('plusc',17)}<span style="margin-left:9px">新建</span>${ic('chevd',8,'margin-left:6px;color:#777')}<div class="sep"></div>${ic('cut',20)}${ic('copy',18,'margin-left:34px')}</div>
  <div class="list">${folders.map((f,i)=>`<x-tree-item icon="${i==9?'zipfolder':'folder'}">${f}</x-tree-item>`).join('')}
  <hr>
  <x-tree-item chev="chevr" icon="cloud">WPS云盘</x-tree-item><x-tree-item chev="chevd" icon="pc">此电脑</x-tree-item>
  <x-tree-item chev="chevr" icon="drive" indent="9">OS (C:)</x-tree-item><x-tree-item chev="chevr" icon="drive2" indent="9" selected>新加卷 (D:)</x-tree-item>
  <x-tree-item chev="chevr" icon="net">网络</x-tree-item></div>
  <div class="status"><span>12 个项目</span><span>选中 1 个项目  19</span></div>`);
}});

def('x-browser',class extends HTMLElement{connectedCallback(){
  shadow(this,`<style>:host{position:absolute;left:498px;top:50px;width:1358px;height:950px;background:#f7f7f7;border-radius:10px 10px 8px 8px;border:1px solid #3c8ad6;border-top:0;box-sizing:border-box;box-shadow:0 0 45px rgba(0,0,0,.28);display:flex;flex-direction:column;font-family:${F};overflow:hidden}
  .tabs{height:46px;background:#2a71d1;display:flex;align-items:flex-end;flex:none;padding-left:11px;position:relative}
  .l{height:46px;display:flex;align-items:center;padding-top:8px;box-sizing:border-box}
  .tab{margin-left:18px;width:270px;height:38px;background:#f7f7f7;border-radius:8px 8px 0 0;display:flex;align-items:center;padding-left:8px;box-sizing:border-box;font-size:13.500px;color:#333;white-space:nowrap;letter-spacing:-.2px}
  .tab span{margin-left:11px;flex:1}
  .plus{margin:0 0 8px 15px;color:#aecbef}
  .wc{margin-left:auto;height:46px;display:flex;align-items:center;color:#fff;gap:40px;padding-right:17px}
  .addr{height:44px;display:flex;align-items:center;flex:none;position:relative;padding-left:20px;color:#222}
  .box{margin-left:21px;width:1033px;height:35px;background:#fff;border:1px solid #dedede;border-radius:18px;box-sizing:border-box;display:flex;align-items:center;padding:0 16px 0 19px;font-size:15px;color:#222;letter-spacing:-.35px;flex:none}
  .box i{font-style:normal;color:#888}.box span{margin-left:18px;flex:1}
  .page{flex:1;background:#fff;margin:0 4px 4px;border-radius:9px;border:1px solid #ededed;box-sizing:border-box;overflow:hidden;display:flex;justify-content:center}
  </style>
  <div class="tabs"><div class="l">${ic('avatar',26)}${ic('wsp',22,'margin-left:22px')}${ic('vtab',22,'margin-left:25px')}</div>
   <div class="tab">${ic('globe',18,'color:#333')}<span>远程调试网页版V5.0</span>${ic('close',11,'color:#222;margin-right:10px')}</div>
   <div class="plus">${ic('plus',18)}</div>
   <div class="wc">${ic('square',14)}${ic('close',17)}</div></div>
  <div class="addr">${ic('back',22,'color:#c8c8c8')}${ic('refresh',22,'margin-left:28px')}
   <div class="box">${ic('info',18)}<span>127.0.0.1<i>:12205</i></span>${ic('edgeg',18)}${ic('star',20,'margin-left:26px')}</div>
   ${ic('ext',20,'margin-left:25px')}<div style="width:1px;height:28px;background:#d5d5d5;margin-left:17px"></div>${ic('favs',20,'margin-left:16px')}${ic('more',20,'margin-left:30px')}${ic('copilot',24,'margin-left:26px')}</div>
  <div class="page"><slot></slot></div>`);
}});

def('x-btn',class extends HTMLElement{connectedCallback(){
  shadow(this,`<style>:host{display:inline-flex;align-items:center;justify-content:center;height:36px;padding:0 17px;background:#4f9bfb;color:#fff;font:500 16px ${F};border-radius:4px;white-space:nowrap;box-sizing:border-box;flex:none}</style><slot></slot>`);
}});
def('x-radio',class extends HTMLElement{connectedCallback(){
  shadow(this,`<style>:host{display:flex;align-items:center;height:27px;box-sizing:border-box;border:1px solid #e4e7ed;border-radius:4px;padding-left:7px;font:14px ${F};color:#606266;white-space:nowrap;flex:none}
  :host([checked]){border-color:#4f9bfb;color:#4f9bfb}
  b{width:14px;height:14px;border-radius:50%;border:1px solid #dcdfe6;box-sizing:border-box;margin-right:9px}
  :host([checked]) b{border:4px solid #4f9bfb;background:#fff}</style><b></b><slot></slot>`);
}});

def('x-debug-page',class extends HTMLElement{connectedCallback(){
  const A=`<span class="ar">-&gt;</span>`;
  shadow(this,`<style>:host{display:flex;flex-direction:column;align-items:center;width:100%;font-family:${F};font-size:16px;position:relative;padding-top:31px;box-sizing:border-box}
  .head{display:flex;flex-direction:column;align-items:center;line-height:22.500px}
  .g{color:#72ad5f}.r{color:#e0715c;font-weight:500;letter-spacing:-.05px}.p{color:#3a2a7a}
  .radios{width:552px;display:flex;justify-content:space-between;margin-top:1px}
  .key{width:552px;display:flex;align-items:center;margin-top:6px;color:#606266}
  .in{height:35px;border:1px solid #dcdfe6;border-radius:4px;box-sizing:border-box;background:#fff;display:flex;align-items:center;padding-left:11px;font:15.700px "Liberation Sans",sans-serif;color:#606266}
  .flow{display:flex;align-items:center;margin:25px 0 0 0;gap:6.250px;width:503px;white-space:nowrap}
  .flow .l{color:#e0715c;margin-right:-2px}.ar{color:#72ad5f}
  fieldset{width:564px;box-sizing:border-box;border:1px solid #ccc;border-radius:4px;margin:30px 0 0 0;padding:7px 0 11px 49px;position:relative;left:11px;display:flex;align-items:center;height:79px}
  legend{margin-left:-38px;padding:0 26px 0 18px;color:#aaa;font-size:18px;line-height:22px;white-space:nowrap}
  .srv{display:flex;align-items:center;color:#aaa;font-size:18px;white-space:nowrap}
  .btns{display:flex;gap:14px;margin-top:5px;width:630px;justify-content:center}
  .btns x-btn{padding:0}
  .log{width:562px;margin-top:8px;font-size:18px;color:#111;line-height:24px}
  .ta{width:562px;height:246px;margin-top:1px;border:1px solid #dcdfe6;border-radius:4px;box-sizing:border-box;position:relative}
  .ta svg{position:absolute;right:1px;bottom:1px}
  .halo{position:absolute;left:379px;top:293px;width:68px;height:68px;border-radius:50%;background:#fffbb8;mix-blend-mode:multiply}
  .cur{position:absolute;left:473px;top:325px}
  </style>
  <div class="head"><div class="g">远程调试网页版V5</div><div class="g">Q群:689634265</div>
  <div class="r">支持任意设备,只要能运行懒人精灵(真机,云机,模拟器)</div><div class="r">作者QQ:592530326</div>
  <div class="r">(购买密钥后,使用中遇到任何问题添加作者QQ协助解决)</div><div class="p">叮当猫脚本系统官方网址</div><div class="p">http://api.privateapi.xyz:9000</div></div>
  <div class="radios"><x-radio checked style="width:143px">电信1线路 34ms</x-radio><x-radio style="width:143px">联通1线路 34ms</x-radio><x-radio style="width:192px">联通2线路(大宽带) 34ms</x-radio></div>
  <div class="key"><span style="width:112px;white-space:nowrap">远程调试密钥:</span><div class="in" style="width:337px">dcdb0032d92643d0b95be1228c326502</div><x-btn style="margin-left:auto;height:35px">测速</x-btn></div>
  <div class="flow"><span class="l">密钥获取流程:</span>${A}<x-btn>注册</x-btn>${A}<x-btn>登录</x-btn>${A}<x-btn>充值</x-btn>${A}<x-btn>获取密钥</x-btn></div>
  <fieldset><legend>测试专用:</legend><div class="srv"><span>服务器:</span><div class="in" style="width:337px;height:36px"></div><x-btn style="margin-left:1px">连接</x-btn></div></fieldset>
  <div class="btns"><x-btn style="width:129px">正向连接调试</x-btn><x-btn style="width:317px;letter-spacing:-.15px">快捷反向连接调试(新,高级版直接用这个)</x-btn><x-btn style="width:156px">反向连接调试(旧)</x-btn></div>
  <div class="log">运行日志:</div>
  <div class="ta"><svg width="10" height="10"><path d="M9 1L1 9M9 5L5 9" stroke="#666"/></svg></div>
  <div class="halo"></div>
  <svg class="cur" width="14" height="24" viewBox="0 0 14 24"><path d="M1 1v18l4.500-4 3 7 3-1.300-3-6.700h5.500z" fill="#fff" stroke="#222" stroke-width="1"/></svg>`);
}});

def('x-badge',class extends HTMLElement{connectedCallback(){
  const k=this.getAttribute('kind');
  const st={black:`background:#1c1c1c;border-radius:2px;padding:0 0 12px 18px;font-size:30.800px;`,
   pill:`background:#00737e;border-radius:30px;justify-content:center;padding-bottom:4px;font-size:30px;`,
   teal:`background:#00737e;border-radius:8px;padding:0 0 12px 17px;font-size:30px;`}[k];
  shadow(this,`<style>:host{position:absolute;display:flex;align-items:center;box-sizing:border-box;color:#eef4f4;font-family:"Liberation Mono",monospace;white-space:pre;${st}}</style><div><slot></slot></div>`);
}});

def('x-taskbar',class extends HTMLElement{connectedCallback(){
  const A=[['win'],['tsearch'],['firefox'],['fileapp',1],['perf'],['chrome'],['bsearch'],['termapp',1],['wps'],['ldapp',1],['lr',1],['goland',1],['yellow',1],['wechat',1],['hm',1],['redapp',1],['folderapp',1],['vsc',1],['obs',1],['edge',2]];
  shadow(this,`<style>:host{position:absolute;left:0;top:1026px;width:1920px;height:54px;background:#123c7c;border-top:1px solid #2b5189;box-sizing:border-box;display:flex;align-items:center;color:#fff;font-family:${F}}
  .apps{display:flex;padding-left:11.200px}
  .a{width:49.600px;height:48px;display:flex;align-items:center;justify-content:center;position:relative;border-radius:5px}
  .a i{position:absolute;left:50%;bottom:1px;width:6px;height:6px;margin-left:-3px;border-radius:50%;background:#8aa3c4}
  .a.on{background:#24507f}.a.on i{width:16px;height:4px;margin-left:-8px;border-radius:2px;background:#6ab8ee;bottom:1px}
  .tray{margin-left:auto;display:flex;align-items:center;padding-right:22px}
  .clock{margin-left:21px;text-align:right;font-size:13px;line-height:18px;color:#e8eef6;white-space:nowrap}
  </style>
  <div class="apps">${A.map(([n,d])=>`<div class="a${d==2?' on':''}">${ic(n,26)}${d?'<i></i>':''}</div>`).join('')}</div>
  <div class="tray"><div style="margin-right:17px;display:flex">${ic('chevd',18,'transform:rotate(180deg)')}</div>${ic('tick',20)}${ic('qq',20,'margin-left:16px')}${ic('greenbox',20,'margin-left:16px')}${ic('bt',18,'margin-left:17px')}
  ${ic('mic',22,'margin-left:52px')}<span style="margin-left:14px;font-size:17px;line-height:1">中</span>${ic('wifi',20,'margin-left:19px')}${ic('vol',18,'margin-left:7px')}${ic('batt',20,'margin-left:9px')}
  <div class="clock">15:40:01<br>2024-12-30</div></div>`);
}});
</script></body></html>
